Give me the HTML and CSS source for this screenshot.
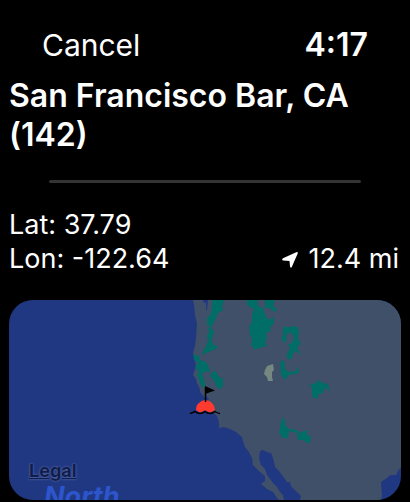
FILE: index.html
```html
<!doctype html>
<html lang="en">
  <head>
    <meta charset="utf-8" />
    <title>San Francisco Bar, CA (142)</title>
    <meta name="viewport" content="width=device-width, initial-scale=1" />
    <link rel="stylesheet" href="styles.css">
  </head>
  <body>
    <header class="topbar">
      <button class="cancel" type="button">Cancel</button>
      <time class="clock">4:17</time>
    </header>
    <main class="station">
      <h1 class="name">San Francisco Bar, CA (142)</h1>
      <hr class="divider" />
      <div class="details">
        <div class="coords">
          <div>Lat: 37.79</div>
          <div>Lon: -122.64</div>
        </div>
        <div class="distance">
          <svg class="arrow" viewBox="0 0 18 18" aria-hidden="true">
            <path d="M15.200 2.200Q17.400 1.600 16.600 3.800L10.800 17Q9.700 18.600 9 16.600L8.500 11L2 10.600Q.300 9.600 2 8.200Z" />
          </svg>
          <span>12.4 mi</span>
        </div>
      </div>
      <div class="map">
        <svg class="terrain" viewBox="0 0 392 200" preserveAspectRatio="xMidYMid slice" aria-hidden="true">
          <rect class="water" width="392" height="200" />
          <!-- mainland and Baja -->
          <path class="land" d="M184 0L185 5L186 15L188 23L187 38L186 46L184 53L186 60L187 67L184 75L187 79L188 83L191 89L191 92L196 98L197 96L200 99L198 102L201 107L204 112L208 116L210 122L210 128L215 127L221 129L227 132L233 137L234 141L236 147L240 152L243 158L244 165L251 172L256 176L256 181L252 184L258 189L264 192L268 198L270 200H275L274 195L271 192L268 187L264 183L261 179L258 175L256 169L252 165L250 158L251 151L254 150L258 152L262 153L264 158L265 162L266 167L270 171L273 175L278 182L281 182L282 186L285 189L288 192L292 196L291 200H372L373 196L372 182L378 178L381 175L387 175L389 171L392 167V0Z" />
          <path class="water" d="M194 0H199L198 10H197V3L194 2Z" />
          <!-- forests -->
          <g class="forest">
            <path d="M203 0H215L213 7L214 10L209 13L206 20L203 26L202 28L205 31L204 36L202 40L205 45L209 47L209 48L202 51L197 53L193 55L194 51L197 46L199 41L198 36L200 32L199 28L202 26L198 25L198 18L202 14L203 7Z" />
            <path d="M184 54L190 56L191 60L197 62L200 67L201 72L197 71L193 74L196 83L196 87L193 87L191 83L188 75L190 72L186 67L189 63L185 60Z" />
            <path d="M203 72L207 71L209 76L214 79L214 87L210 89L206 84L205 80L201 76Z" />
            <path d="M238 0H249L248 5L254 8L257 17L261 20L264 16L265 23L261 28L262 31L257 33L258 38L256 42L258 46L250 48L246 50L242 45L243 40L241 34L240 27L243 22L243 15L245 9L238 5Z" />
            <path d="M256 0H266L264 5L268 10L265 12L261 8L256 8Z" />
            <path d="M274 27H281L287 26L290 30L289 39L292 44L288 47L292 56L287 51L284 53L283 58L280 60L277 55L281 49L279 44L283 43L285 38L283 33L278 33L277 43L272 39L274 35Z" />
            <path d="M271 62L275 60L276 69L280 72L287 71L289 66L290 73L280 75L276 80L272 75Z" />
            <path d="M300 85L307 83L310 80L315 84L318 83L321 91L315 88L314 93L310 94L308 99L303 97L303 87Z" />
            <path d="M273 118L276 119L276 125L280 129L288 130L290 133L298 130L298 135L302 136L301 143L296 142L295 140L289 140L288 133L280 131L279 138L274 138L270 133Z" />
          </g>
          <path class="desert" d="M258 66L264 64L265 70L263 72L263 77L264 81L259 81L258 77L255 74L256 70Z" />
          <!-- buoy -->
          <path class="buoy" d="M187 110Q187 105 190 103Q193 100 196 100Q200 100 203 103Q206 106 206 110L201 112.500L196 110.500L191 112.500Z" />
          <path class="line" d="M196.500 102V87" />
          <path d="M196 86L206 90.500L196 94Z" />
          <path class="line" d="M181 113.500Q183 113 186 111.500Q191 115.500 196 111.500Q201 115.500 206 111.500Q209 113.500 211 113.500" />
        </svg>
        <a class="legal" href="#">Legal</a>
        <span class="ocean">North</span>
      </div>
    </main>
  </body>
</html>
```

FILE: styles.css
```css
body {
  margin: 0;
  background: #000;
  color: #fff;
  font-family: Inter, "Liberation Sans", sans-serif;
}
.topbar {
  display: flex;
  justify-content: space-between;
  align-items: baseline;
  padding: 26px 42px 0;
}
.cancel {
  padding: 0;
  border: 0;
  background: none;
  color: inherit;
  font: 400 30px/38px Inter, "Liberation Sans", sans-serif;
}
.clock {
  font-size: 32px;
  font-weight: 600;
  line-height: 38px;
}
.station {
  padding: 0 9px;
}
.name {
  margin: 12px 0 0;
  font-size: 32px;
  font-weight: 600;
  line-height: 39px;
}
.divider {
  height: 3px;
  margin: 26px 40px 25px;
  border: 0;
  border-radius: 2px;
  background: #333;
}
.details {
  display: flex;
  justify-content: space-between;
  align-items: flex-end;
  font-size: 27px;
  line-height: 34px;
}
.distance {
  display: flex;
  align-items: center;
  gap: 10px;
  padding-right: 2px;
}
.arrow {
  width: 18px;
  height: 18px;
  fill: #fff;
}
.map {
  position: relative;
  margin-top: 24px;
  border-radius: 24px;
  overflow: hidden;
}
.terrain {
  display: block;
  width: 100%;
}
.water {
  fill: #203882;
}
.land {
  fill: #405068;
}
.forest {
  fill: #006d67;
}
.desert {
  fill: #748780;
}
.buoy {
  fill: #ff3b30;
}
.line {
  fill: none;
  stroke: #000;
  stroke-width: 1.5;
}
.legal {
  position: absolute;
  left: 20px;
  bottom: 18px;
  color: #101d4c;
  font-size: 18px;
  font-weight: 700;
  line-height: 22px;
  text-shadow: 0 0 2px #7484b8;
}
.ocean {
  position: absolute;
  left: 35px;
  bottom: -12px;
  color: #2d55cc;
  font-size: 27px;
  font-style: italic;
  font-weight: 700;
  line-height: 30px;
}
```
